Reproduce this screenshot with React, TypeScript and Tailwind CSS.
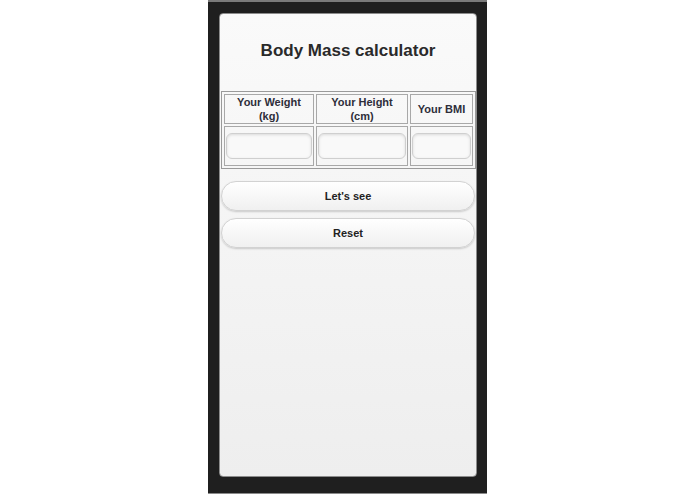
import React from "react";

const font = { fontFamily: '"Liberation Sans", Arial, sans-serif' };

function Field() {
  return (
    <input
      type="text"
      className="block h-[26px] w-full rounded-[6px] border border-[#cfcfcf] bg-[#f9f9f9] shadow-[inset_0_1px_3px_rgba(0,0,0,0.12)] outline-none"
    />
  );
}

export default function App() {
  const headers = [
    { label: "Your Weight", unit: "(kg)", w: "w-[90px]" },
    { label: "Your Height", unit: "(cm)", w: "w-[92px]" },
    { label: "Your BMI", unit: "", w: "w-[63px]" },
  ];

  return (
    <div className="flex h-[494px] w-full justify-center bg-white" style={font}>
      <div className="h-[494px] w-[279px] border-t-2 border-b border-t-[#7a7a7a] border-b-[#8a8a8a] bg-[#1f1f1f] pt-[11px] pl-[11px] pr-[10px]">
        <div className="h-[464px] rounded-[4px] border border-[#8c8c8c] bg-linear-to-b from-[#fafafa] to-[#eeeeee]">
          <div className="mb-[4px] flex h-[73px] items-center justify-center">
            <h1 className="text-[17px] font-bold text-[#2a2a2a]">Body Mass calculator</h1>
          </div>

          <table className="ml-[1px] w-[255px] table-fixed border-separate border-spacing-[2px] border border-[#9a9a9a]">
            <thead>
              <tr>
                {headers.map((h) => (
                  <th
                    key={h.label}
                    className={`${h.w} h-[29px] border border-[#a8a8a8] p-0 text-center align-middle text-[11px] font-bold leading-[14px] text-[#2e2e3a]`}
                  >
                    {h.label}
                    {h.unit && (
                      <>
                        <br />
                        {h.unit}
                      </>
                    )}
                  </th>
                ))}
              </tr>
            </thead>
            <tbody>
              <tr>
                {headers.map((h) => (
                  <td key={h.label} className="h-[40px] border border-[#a8a8a8] px-[1px] pt-[6px] pb-[4px] align-top">
                    <Field />
                  </td>
                ))}
              </tr>
            </tbody>
          </table>

          <div className="mx-[1px] mt-[12px] flex flex-col gap-[7px]">
            <button className="h-[30px] w-full rounded-full border border-[#d2d2d2] bg-linear-to-b from-white to-[#f0f0f0] text-[11px] font-bold text-[#222] shadow-[0_1px_2px_rgba(0,0,0,0.18)]">
              Let's see
            </button>
            <button className="h-[30px] w-full rounded-full border border-[#d2d2d2] bg-linear-to-b from-white to-[#f0f0f0] text-[11px] font-bold text-[#222] shadow-[0_1px_2px_rgba(0,0,0,0.18)]">
              Reset
            </button>
          </div>
        </div>
      </div>
    </div>
  );
}
